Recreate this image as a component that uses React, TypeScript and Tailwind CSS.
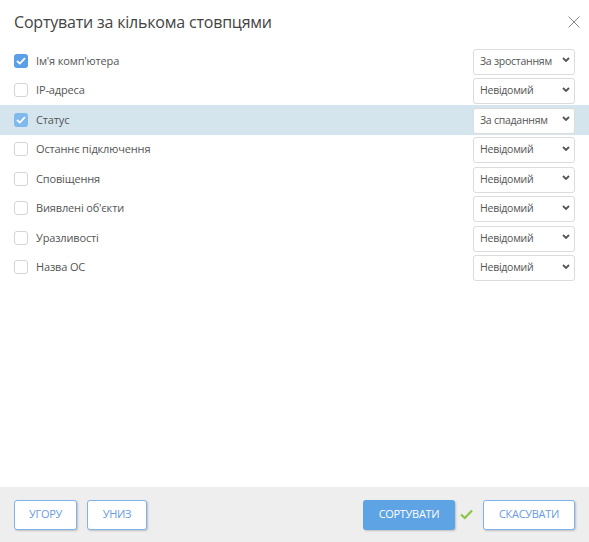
import { useState } from "react";

type Dir = "asc" | "desc" | "none";

interface Row {
  label: string;
  checked: boolean;
  dir: Dir;
}

const LABELS: Record<Dir, string> = {
  asc: "За зростанням",
  desc: "За спаданням",
  none: "Невідомий",
};

const INITIAL: Row[] = [
  { label: "Ім'я комп'ютера", checked: true, dir: "asc" },
  { label: "IP-адреса", checked: false, dir: "none" },
  { label: "Статус", checked: true, dir: "desc" },
  { label: "Останнє підключення", checked: false, dir: "none" },
  { label: "Сповіщення", checked: false, dir: "none" },
  { label: "Виявлені об'єкти", checked: false, dir: "none" },
  { label: "Уразливості", checked: false, dir: "none" },
  { label: "Назва ОС", checked: false, dir: "none" },
];

export default function App() {
  const [rows, setRows] = useState<Row[]>(INITIAL);
  const [selected, setSelected] = useState(2);

  const toggle = (i: number) =>
    setRows((prev) => prev.map((r, j) => (j === i ? { ...r, checked: !r.checked } : r)));

  const setDir = (i: number, dir: Dir) =>
    setRows((prev) => prev.map((r, j) => (j === i ? { ...r, dir } : r)));

  return (
    <div className="flex h-[542px] w-[589px] flex-col bg-white font-['Open_Sans',sans-serif] text-[#444]">
      {/* Header */}
      <div className="flex items-center justify-between pl-[14px] pr-[8px] pt-[11px] pb-[9px]">
        <h2 className="text-[16px] leading-[22px] tracking-[-0.2px] text-[#444]">Сортувати за кількома стовпцями</h2>
        <button className="flex h-[14px] w-[14px] items-center justify-center text-[#888]">
          <svg width="12" height="12" viewBox="0 0 12 12" fill="none" stroke="currentColor" strokeWidth="1">
            <path d="M0.5 0.5 L11.5 11.5 M11.5 0.5 L0.5 11.5" />
          </svg>
        </button>
      </div>

      {/* Rows */}
      <div className="flex flex-1 flex-col pt-[4px]">
        {rows.map((row, i) => (
          <div
            key={row.label}
            onClick={() => setSelected(i)}
            className={`flex h-[29.5px] items-center pl-[14px] pr-[14px] ${i === selected ? "bg-[#d4e5ee]" : ""}`}
          >
            <button
              onClick={(e) => { e.stopPropagation(); toggle(i); }}
              className={`flex h-[14px] w-[14px] items-center justify-center rounded-[3px] ${
                row.checked
                  ? i === selected ? "bg-[#80b9ee]" : "bg-[#5b9fe6]"
                  : "border border-[#d5d5d5] bg-white"
              }`}
            >
              {row.checked && (
                <svg width="10" height="8" viewBox="0 0 10 8" fill="none" stroke="white" strokeWidth="1.8">
                  <path d="M1 4 L3.8 6.6 L9 1.2" />
                </svg>
              )}
            </button>
            <span className="ml-[8px] flex-1 text-[11px] tracking-[-0.15px] text-[#555]">{row.label}</span>
            <div className="relative">
              <select
                value={row.dir}
                onChange={(e) => setDir(i, e.target.value as Dir)}
                className="h-[26px] w-[102px] appearance-none rounded-[3px] border border-[#dcdcdc] bg-white pl-[6px] pr-[14px] text-[10.5px] tracking-[-0.25px] text-[#555] outline-none"
              >
                <option value="asc">{LABELS.asc}</option>
                <option value="desc">{LABELS.desc}</option>
                <option value="none">{LABELS.none}</option>
              </select>
              <svg
                className="pointer-events-none absolute right-[5px] top-[10.5px]"
                width="8" height="5" viewBox="0 0 8 5" fill="none" stroke="#555" strokeWidth="1.8"
              >
                <path d="M1 1 L4 4 L7 1" />
              </svg>
            </div>
          </div>
        ))}
      </div>

      {/* Footer */}
      <div className="flex h-[55px] items-center bg-[#eeeeee] px-[14px]">
        <div className="flex gap-[10px]">
          <button className="h-[30px] w-[63px] rounded-[3px] border border-[#7fb3ea] bg-white text-[11px] tracking-[-0.3px] text-[#6b9be0] shadow-[1px_1px_2px_rgba(0,0,0,0.2)]">
            УГОРУ
          </button>
          <button className="h-[30px] w-[60px] rounded-[3px] border border-[#7fb3ea] bg-white text-[11px] tracking-[-0.3px] text-[#6b9be0] shadow-[1px_1px_2px_rgba(0,0,0,0.2)]">
            УНИЗ
          </button>
        </div>
        <div className="ml-auto flex items-center">
          <button className="h-[30px] w-[92px] rounded-[3px] bg-[#5ea3e4] text-[11px] tracking-[-0.3px] text-white shadow-[1px_1px_2px_rgba(0,0,0,0.2)]">
            СОРТУВАТИ
          </button>
          <svg className="ml-[5px]" width="13" height="11" viewBox="0 0 13 11" fill="none" stroke="#8cc63f" strokeWidth="2.2">
            <path d="M1 5.5 L4.8 9 L12 1.5" />
          </svg>
          <button className="ml-[10px] h-[30px] w-[92px] rounded-[3px] border border-[#7fb3ea] bg-white text-[11px] tracking-[-0.3px] text-[#6b9be0] shadow-[1px_1px_2px_rgba(0,0,0,0.2)]">
            СКАСУВАТИ
          </button>
        </div>
      </div>
    </div>
  );
}
